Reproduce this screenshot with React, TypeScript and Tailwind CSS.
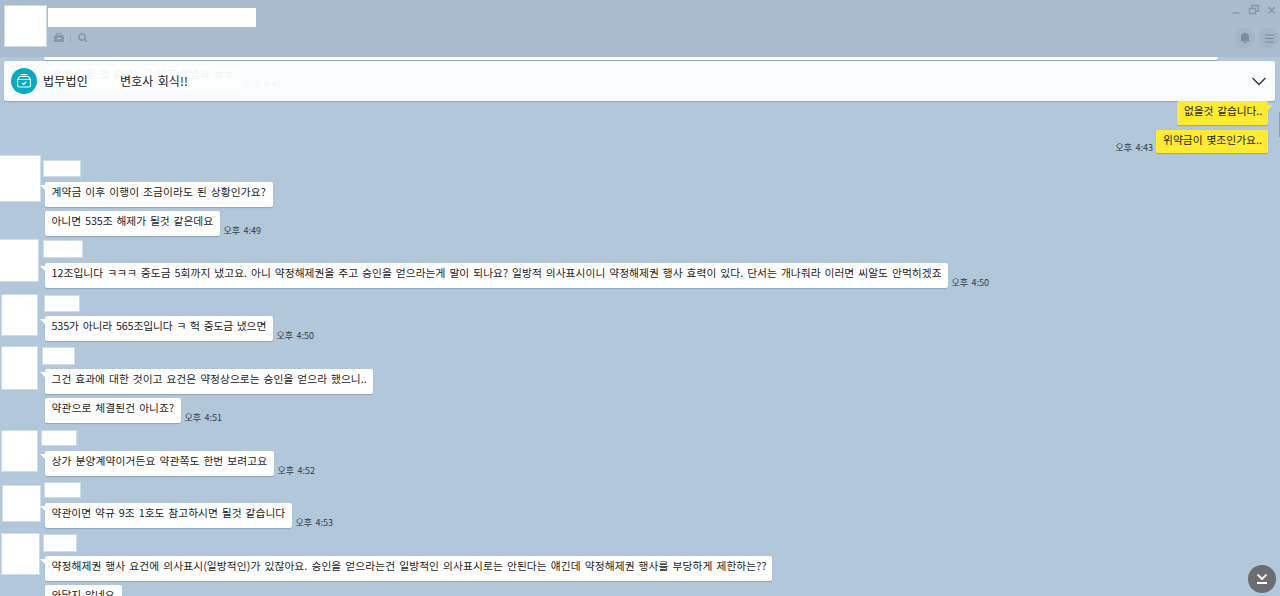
import React from 'react';
import clsx from 'clsx';

type Message = { text: string; box: string; fit?: string; time?: string };
type Group = { height: string; avatar: string; name: string; messages: Message[] };

const groups: Group[] = [
  {
    height: 'h-[81px]',
    avatar: 'w-10 h-[45px]',
    name: 'ml-[44px] mt-[5px] w-9 h-[15px]',
    messages: [
      { text: '계약금 이후 이행이 조금이라도 된 상황인가요?', box: 'w-[228px]', fit: 'tracking-[0.07px]' },
      { text: '아니면 535조 해제가 될것 같은데요', box: 'w-[175px]', fit: 'tracking-[-0.03px]', time: '오후 4:49' },
    ],
  },
  {
    height: 'h-[53px]',
    avatar: 'mt-[3px] w-[38px] h-[41px]',
    name: 'ml-[44px] mt-1 w-[38px] h-4',
    messages: [
      {
        text: '12조입니다 ㅋㅋㅋ 중도금 5회까지 냈고요. 아니 약정해제권을 주고 승인을 얻으라는게 말이 되나요? 일방적 의사표시이니 약정해제권 행사 효력이 있다. 단서는 개나줘라 이러면 씨알도 안먹히겠죠',
        box: 'w-[903px]',
        fit: 'tracking-[0.035px]',
        time: '오후 4:50',
      },
    ],
  },
  {
    height: 'h-[52.5px]',
    avatar: 'ml-[2px] mt-[5px] w-[35px] h-10',
    name: 'ml-[45px] mt-[6px] w-[34px] h-[15px]',
    messages: [
      { text: '535가 아니라 565조입니다 ㅋ 헉 중도금 냈으면', box: 'w-[228px]', fit: 'tracking-[-0.1px]', time: '오후 4:50' },
    ],
  },
  {
    height: 'h-[82px]',
    avatar: 'ml-[2px] mt-[4.5px] w-[35px] h-[42px]',
    name: 'ml-[43px] mt-[5.5px] w-[31px] h-4',
    messages: [
      { text: '그건 효과에 대한 것이고 요건은 약정상으로는 승인을 얻으라 했으니..', box: 'w-[328px]', fit: 'tracking-[0.03px]' },
      { text: '약관으로 체결된건 아니죠?', box: 'w-[136px]', fit: 'tracking-[0.07px]', time: '오후 4:51' },
    ],
  },
  {
    height: 'h-[52.5px]',
    avatar: 'ml-[2px] mt-[6.5px] w-[35px] h-10',
    name: 'ml-[42px] mt-[6.5px] w-[34px] h-[14px]',
    messages: [
      { text: '상가 분양계약이거든요 약관쪽도 한번 보려고요', box: 'w-[229px]', fit: 'tracking-[0.1px]', time: '오후 4:52' },
    ],
  },
  {
    height: 'h-[52.5px]',
    avatar: 'ml-[3px] mt-[9px] w-[37px] h-[35px]',
    name: 'ml-[45px] mt-[6px] w-[35px] h-[14px]',
    messages: [
      { text: '약관이면 약규 9조 1호도 참고하시면 될것 같습니다', box: 'w-[247px]', fit: 'tracking-[0.02px]', time: '오후 4:53' },
    ],
  },
  {
    height: 'h-[82px]',
    avatar: 'ml-[2px] mt-[4.5px] w-[37px] h-10',
    name: 'ml-[44px] mt-[5.5px] w-8 h-4',
    messages: [
      {
        text: '약정해제권 행사 요건에 의사표시(일방적인)가 있잖아요. 승인을 얻으라는건 일방적인 의사표시로는 안된다는 얘긴데 약정해제권 행사를 부당하게 제한하는??',
        box: 'w-[727px]',
        fit: 'tracking-[0.085px]',
      },
      { text: '와닿지 않네요', box: 'w-[77px]' },
    ],
  },
];

const textStyle = 'text-[10.75px] leading-[20px] [word-spacing:1.5px] whitespace-nowrap text-[#1c1c1c]';

function Time({ children }: { children: React.ReactNode }) {
  return (
    <span className="relative top-px text-[9px] leading-3 [word-spacing:1.5px] whitespace-nowrap text-[#333d46]">
      {children}
    </span>
  );
}

function ChatGroup({ group }: { group: Group }) {
  return (
    <div className={clsx('grid shrink-0 grid-cols-1 items-start', group.height)}>
      <div className={clsx('col-start-1 row-start-1 bg-white ring-1 ring-[#cfdde9]', group.avatar)} />
      <div className={clsx('col-start-1 row-start-1 bg-white ring-1 ring-[#cfdde9]', group.name)} />
      <div className="col-start-1 row-start-1 ml-[44.5px] mt-[26px] flex flex-col gap-1">
        {group.messages.map((message, i) => (
          <div key={message.text} className="flex items-end gap-1">
            <div
              className={clsx(
                'relative h-[25px] shrink-0 rounded-[2px] bg-white pl-[7px] shadow-[0_1px_1px_#8da6bb]',
                textStyle,
                message.box,
              )}
            >
              {i === 0 && (
                <svg className="absolute -left-[5px] top-[3px]" width="6" height="6" viewBox="0 0 6 6">
                  <path d="M0 0h6v6z" fill="#fff" />
                </svg>
              )}
              <span className={message.fit}>{message.text}</span>
            </div>
            {message.time && <Time>{message.time}</Time>}
          </div>
        ))}
      </div>
    </div>
  );
}

function Header() {
  return (
    <header className="flex h-[57px] shrink-0 justify-between bg-[#a9bbcd]">
      <div className="flex">
        <div className="ml-[5px] mt-[6px] h-10 w-[41px] bg-white ring-1 ring-[#cfdbe6]" />
        <div className="ml-[2px] mt-2 flex flex-col">
          <div className="h-[19px] w-[208px] bg-white" />
          <div className="ml-[6px] mt-[6px] flex items-center">
            <svg width="10" height="10" viewBox="0 0 10 10" fill="#8798a8">
              <path d="M2 0.300h6v1H2zM1.200 2h7.600l1.200 1.700V8a1 1 0 0 1-1 1H1a1 1 0 0 1-1-1V3.700z" />
              <path d="M3 5.500h4" stroke="#b9c8d6" strokeWidth="1.200" />
            </svg>
            <div className="ml-[6px] h-[7px] w-px bg-[#97a9ba]" />
            <svg className="ml-[7px]" width="10" height="10" viewBox="0 0 10 10" fill="none" stroke="#8798a8" strokeWidth="1.500">
              <circle cx="4" cy="4" r="3.200" />
              <path d="M6.300 6.300l2.700 2.700" />
            </svg>
          </div>
        </div>
      </div>

      <div className="flex w-[50px] flex-col">
        <svg className="mt-[3px]" width="50" height="14" viewBox="0 0 50 14" fill="none" stroke="#8697a7" strokeWidth="1.300">
          <path d="M2.500 10h7" />
          <path d="M19.500 5.500h6v5h-6zM22 5V2.500h6.500V8H26" />
          <path d="M38.500 4l6.500 6.500M45 4l-6.500 6.500" />
        </svg>
        <div className="ml-[5px] mt-[11px] flex gap-1">
          <div className="flex size-5 items-center justify-center rounded-full bg-[#a3b5c6]">
            <svg width="10" height="12" viewBox="0 0 10 12" fill="#7b8c9c">
              <path d="M5 .5c.7 0 1 .4 1 .8 2 .4 3 1.700 3 3.700v3l.7 1.200H.3L1 8V5c0-2 1-3.300 3-3.700 0-.4.300-.8 1-.8zM3.500 9.700h3c0 1-.7 1.600-1.500 1.600s-1.500-.6-1.500-1.600z" />
            </svg>
          </div>
          <div className="flex size-5 items-center justify-center rounded-full bg-[#a3b5c6]">
            <svg width="9" height="9" viewBox="0 0 9 9" stroke="#7b8c9c" strokeWidth="1.200">
              <path d="M0 1h9M0 4.500h9M0 8h9" />
            </svg>
          </div>
        </div>
      </div>
    </header>
  );
}

function Notice() {
  return (
    <div className="ml-1 grid h-10 w-[1271px] shrink-0 grid-cols-1 rounded-[2px] bg-[#fbfcfe] shadow-[0_1px_1px_#8fa5b9]">
      {/* message showing faintly through the notice */}
      <div className="col-start-1 row-start-1 flex items-start">
        <div className="ml-10 mt-[5px] h-6 w-[196px] bg-[#fdfefe] pl-2 text-[10.75px] leading-4 [word-spacing:1.5px] whitespace-nowrap text-[#f3f4f6]">
          딱히 얻을 것 같다는걸 알고 있습돠 ㅠㅠ
        </div>
        <div className="ml-1 mt-4 text-[9px] leading-[14px] [word-spacing:1.5px] text-[#f4f5f7]">오후 4:41</div>
      </div>
      <div className="col-start-1 row-start-1 flex items-center">
        <div className="ml-[7px] flex size-[26px] items-center justify-center rounded-full bg-[#06acbe]">
          <svg width="14" height="14" viewBox="0 0 14 14" fill="none" stroke="#fff" strokeWidth="1.100">
            <path d="M3.500 .6h7M2.600 2.500h8.800L13.400 5.500v6a1.500 1.500 0 0 1-1.500 1.500H2.100A1.500 1.500 0 0 1 .6 11.500v-6zM.6 5.500h12.800" />
            <path d="M5 9l1.600 1.500L9.300 7.700" strokeWidth="1.200" />
          </svg>
        </div>
        <span className="ml-[6px] w-[77px] text-xs tracking-[0.2px] whitespace-nowrap text-[#222]">법무법인</span>
        <span className="text-xs tracking-[0.1px] whitespace-nowrap text-[#222] [word-spacing:1.5px]">변호사 회식!!</span>
        <svg className="ml-auto mr-[9px]" width="14" height="9" viewBox="0 0 14 9" fill="none" stroke="#333" strokeWidth="1.400">
          <path d="M.5 1L7 7.500L13.500 1" />
        </svg>
      </div>
    </div>
  );
}

export default function App() {
  return (
    <div className="relative flex h-[596px] w-[1280px] flex-col overflow-hidden bg-[#b2c7da] font-['Noto_Sans_CJK_KR',sans-serif]">
      <Header />
      <div className="h-1 shrink-0">
        <div className="ml-[44px] h-[3px] w-[1174px] rounded-b-[2px] bg-white shadow-[0_1px_0_#8da6bb]" />
      </div>
      <Notice />

      {/* Sent messages */}
      <div className="flex h-[55px] shrink-0 flex-col items-end gap-[5px] pr-3">
        <div className={clsx('relative h-6 w-[91px] rounded-[2px] bg-[#ffeb33] pl-[7px] shadow-[0_1px_1px_#8da6bb]', textStyle)}>
          <svg className="absolute -right-[5px] top-1" width="6" height="6" viewBox="0 0 6 6">
            <path d="M6 0H0v6z" fill="#ffeb33" />
          </svg>
          <span className="tracking-[-0.1px]">없을것 같습니다..</span>
        </div>
        <div className="flex items-end gap-[3px]">
          <Time>오후 4:43</Time>
          <div className={clsx('h-[23px] w-[112px] rounded-[2px] bg-[#ffeb33] pl-[7px] shadow-[0_1px_1px_#8da6bb]', textStyle)}>
            <span>위약금이 몇조인가요..</span>
          </div>
        </div>
      </div>

      {groups.map((group) => (
        <ChatGroup key={group.messages[0].text} group={group} />
      ))}

      <div className="absolute right-0 top-[112px] h-[25px] w-px bg-[#8f9fae]" />
      <button className="absolute left-[1247.5px] top-[565px] flex size-7 items-center justify-center rounded-full bg-[#6c6d70]">
        <svg width="12" height="12" viewBox="0 0 12 12" fill="none" stroke="#fff" strokeWidth="1.800">
          <path d="M1.500 1.500L6 6l4.500-4.500M1 10h10" />
        </svg>
      </button>
    </div>
  );
}
